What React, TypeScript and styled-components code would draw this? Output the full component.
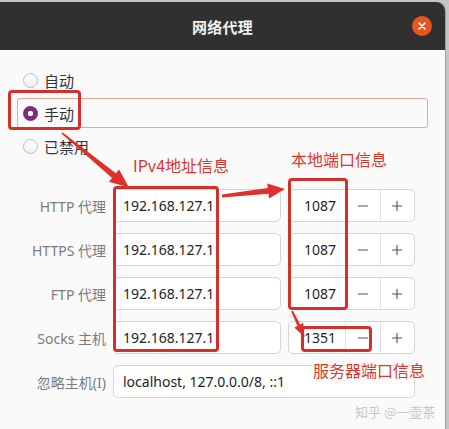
import { Fragment } from "react";
import styled, { createGlobalStyle } from "styled-components";

type ProxyRow = {
  label: string;
  host: string;
  port: string;
};

const rows: ProxyRow[] = [
  { label: "HTTP 代理", host: "192.168.127.1", port: "1087" },
  { label: "HTTPS 代理", host: "192.168.127.1", port: "1087" },
  { label: "FTP 代理", host: "192.168.127.1", port: "1087" },
  { label: "Socks 主机", host: "192.168.127.1", port: "1351" },
];

const modes = [
  { label: "自动", checked: false, focused: false },
  { label: "手动", checked: true, focused: true },
  { label: "已禁用", checked: false, focused: false },
];

const App = () => {
  return (
    <Page>
      <GlobalStyle />
      <Dialog>
        <TitleBar>
          <span />
          <Title>网络代理</Title>
          <CloseButton>
            <svg width="8" height="8" viewBox="0 0 8 8">
              <path d="M1 1L7 7M7 1L1 7" stroke="#fff" strokeWidth="1.6" strokeLinecap="round" />
            </svg>
          </CloseButton>
        </TitleBar>
        <Content>
          <RadioList>
            {modes.map((m) => (
              <RadioRow key={m.label} $focused={m.focused}>
                <RadioDot $checked={m.checked} />
                <RadioLabel>{m.label}</RadioLabel>
              </RadioRow>
            ))}
          </RadioList>
          <ProxyGrid>
            {rows.map((r) => (
              <Fragment key={r.label}>
                <FieldLabel>{r.label}</FieldLabel>
                <Entry>{r.host}</Entry>
                <Spin>
                  <SpinValue>{r.port}</SpinValue>
                  <SpinButton>
                    <svg width="12" height="12" viewBox="0 0 12 12">
                      <path d="M1 6H11" stroke="#505050" strokeWidth="1.1" />
                    </svg>
                  </SpinButton>
                  <SpinButton>
                    <svg width="12" height="12" viewBox="0 0 12 12">
                      <path d="M1 6H11M6 1V11" stroke="#505050" strokeWidth="1.1" />
                    </svg>
                  </SpinButton>
                </Spin>
              </Fragment>
            ))}
            <FieldLabel>忽略主机(I)</FieldLabel>
            <WideEntry>localhost, 127.0.0.0/8, ::1</WideEntry>
          </ProxyGrid>
        </Content>
      </Dialog>

      <Overlay>
        <svg width="449" height="429" viewBox="0 0 449 429">
          <polygon
            fill="#e0302a"
            points="61.4,133.6 112.1,177.9 108.9,181.8 129,187.5 119.1,169.4 115.9,173.3 62.6,132.4"
          />
          <polygon
            fill="#e0302a"
            points="222.1,197.6 268.6,193.8 269,198.4 285,189 267.2,183.4 267.8,188.0 221.9,194.6"
          />
          <polygon
            fill="#e0302a"
            points="291.2,311.3 297.4,325.9 294.3,327.6 304.5,337 303.3,322.8 300.2,324.6 293,310.7"
          />
        </svg>
        <RedBox style={{ left: 8, top: 90, width: 73, height: 40 }} />
        <RedBox style={{ left: 113, top: 186, width: 106, height: 166 }} />
        <RedBox style={{ left: 288, top: 178, width: 60, height: 132 }} />
        <RedBox style={{ left: 301, top: 326, width: 71, height: 26 }} />
        <Note style={{ left: 133, top: 155 }}>IPv4地址信息</Note>
        <Note style={{ left: 291, top: 149 }}>本地端口信息</Note>
        <Note style={{ left: 313, top: 360 }}>服务器端口信息</Note>
        <Watermark>知乎 @一壶茶</Watermark>
      </Overlay>
    </Page>
  );
};

export default App;

const GlobalStyle = createGlobalStyle`
  html, body {
    margin: 0;
    padding: 0;
    background: #bdbdbd;
  }
  body {
    font-family: "Noto Sans", "Noto Sans CJK SC", sans-serif;
  }
`;

const Page = styled.div`
  position: relative;
  width: 449px;
  height: 429px;
  padding-top: 2px;
  box-sizing: border-box;
  background: #c4c4c4;
  overflow: hidden;
`;

const Dialog = styled.div`
  width: 446px;
  height: 427px;
  background: #fafafa;
  border-right: 1px solid #9d9d9d;
  box-sizing: border-box;
  border-radius: 0 9px 0 0;
  overflow: hidden;
`;

const TitleBar = styled.div`
  height: 48px;
  background: #303030;
  display: grid;
  grid-template-columns: 1fr auto 1fr;
  align-items: center;
`;

const Title = styled.div`
  color: #f2f2f2;
  font-size: 15px;
  font-weight: 700;
  letter-spacing: 0.3px;
`;

const CloseButton = styled.div`
  justify-self: end;
  margin-right: 13px;
  width: 20px;
  height: 20px;
  border-radius: 50%;
  background: #e9541f;
  display: flex;
  align-items: center;
  justify-content: center;
`;

const Content = styled.div`
  padding-top: 15px;
`;

const RadioList = styled.div`
  display: flex;
  flex-direction: column;
  gap: 3px;
  padding-left: 17px;
  width: 411px;
`;

const RadioRow = styled.div<{ $focused: boolean }>`
  height: 30px;
  box-sizing: border-box;
  display: flex;
  align-items: center;
  gap: 6px;
  padding-left: 5px;
  border: 1px solid ${({ $focused }) => ($focused ? "#e6a994" : "transparent")};
  border-radius: 3px;
`;

const RadioDot = styled.span<{ $checked: boolean }>`
  width: 15px;
  height: 15px;
  box-sizing: border-box;
  border-radius: 50%;
  border: 1px solid ${({ $checked }) => ($checked ? "#762572" : "#bcbcbc")};
  background: ${({ $checked }) =>
    $checked
      ? "radial-gradient(circle, #fff 0 2.5px, #80297f 3px)"
      : "linear-gradient(#ffffff, #f1f1f1)"};
`;

const RadioLabel = styled.span`
  font-size: 15px;
  color: #333;
`;

const ProxyGrid = styled.div`
  margin-top: 28px;
  display: grid;
  grid-template-columns: 106px 168px 127px;
  grid-auto-rows: 33px;
  column-gap: 7px;
  row-gap: 11px;
`;

const FieldLabel = styled.div`
  justify-self: end;
  align-self: center;
  font-size: 14px;
  color: #7b7b7b;
`;

const Entry = styled.div`
  box-sizing: border-box;
  border: 1px solid #d8d4d0;
  border-radius: 5px;
  background: #fff;
  display: flex;
  align-items: center;
  padding-left: 9px;
  font-size: 14px;
  color: #1e1e1e;
`;

const WideEntry = styled(Entry)`
  grid-column: 2 / span 2;
`;

const Spin = styled.div`
  box-sizing: border-box;
  border: 1px solid #d8d4d0;
  border-radius: 5px;
  background: #fff;
  display: flex;
`;

const SpinValue = styled.div`
  width: 56px;
  box-sizing: border-box;
  display: flex;
  align-items: center;
  justify-content: flex-end;
  padding-right: 9px;
  font-size: 14px;
  color: #1e1e1e;
`;

const SpinButton = styled.div`
  flex: 1;
  border-left: 1px solid #e4e1de;
  display: flex;
  align-items: center;
  justify-content: center;
`;

const Overlay = styled.div`
  position: absolute;
  inset: 0;
  pointer-events: none;

  svg {
    position: absolute;
    left: 0;
    top: 0;
  }
`;

const RedBox = styled.div`
  position: absolute;
  box-sizing: border-box;
  border: 3px solid #d3302b;
  border-radius: 4px;
`;

const Note = styled.div`
  position: absolute;
  font-family: "Noto Sans CJK SC", sans-serif;
  font-size: 16px;
  line-height: 20px;
  color: #d9382d;
  white-space: nowrap;
`;

const Watermark = styled.div`
  position: absolute;
  left: 355px;
  top: 403px;
  font-family: "Noto Sans CJK SC", sans-serif;
  font-size: 13px;
  line-height: 18px;
  color: #c6c6c6;
  white-space: nowrap;
`;
